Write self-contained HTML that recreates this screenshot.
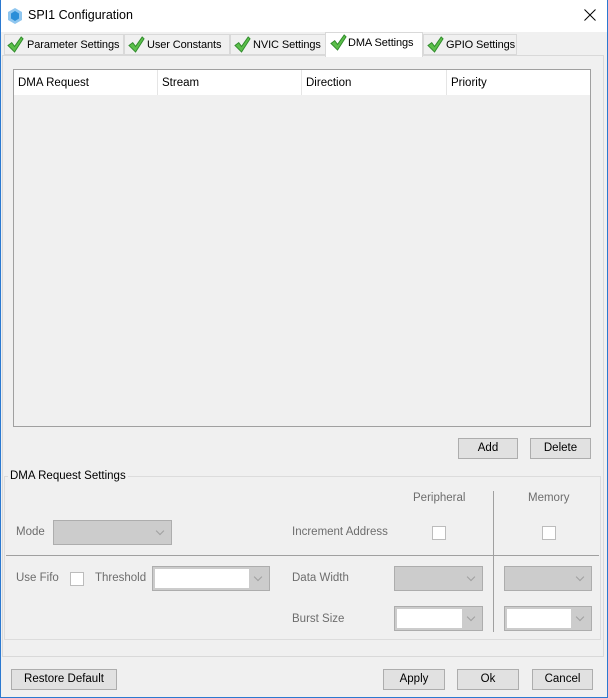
<!DOCTYPE html><html><head><style>
body{margin:0;width:608px;height:698px;background:#f0f0f0;font-family:"Liberation Sans",sans-serif;font-size:11.5px;color:#000;position:relative;overflow:hidden}
.a{position:absolute;white-space:nowrap}
.btn{position:absolute;background:#e1e1e1;border:1px solid #adadad;box-sizing:border-box;text-align:center;line-height:19px;font-size:11.5px}
.g{color:#6d6d6d}
.cb{position:absolute;width:12px;height:12px;background:#fff;border:1px solid #bcbcbc}
.dd{position:absolute;background:#cccccc;border:1px solid #adadad;box-sizing:border-box}
.dd:after{content:"";position:absolute;right:8px;top:7px;width:5px;height:5px;border-right:1px solid #a0a0a0;border-bottom:1px solid #a0a0a0;transform:rotate(45deg)}
.dw .in{position:absolute;left:2px;top:2px;bottom:2px;right:20px;background:#fff}
.tab{position:absolute;top:34px;height:21px;background:#f0f0f0;border:1px solid #d9d9d9;box-sizing:border-box;padding-left:22px;line-height:20px;font-size:11px;white-space:nowrap;overflow:hidden;letter-spacing:-0.1px}
</style></head><body>
<div class="a" style="left:0;top:0;width:608px;height:32px;background:#fff"></div>
<svg class="a" style="left:8px;top:8px" width="14" height="16"><polygon points="7,0 14,4 14,12 7,16 0,12 0,4" fill="#8fc6ef"/><polygon points="7,3 11,5.5 11,10.5 7,13 3,10.5 3,5.5" fill="#2a8ed8"/></svg>
<div class="a" style="left:28px;top:8px;font-size:12.5px">SPI1 Configuration</div>
<svg class="a" style="left:584px;top:9px" width="12" height="12"><path d="M0.5 0.5 L11.5 11.5 M11.5 0.5 L0.5 11.5" stroke="#000" stroke-width="1"/></svg>
<div class="a" style="left:2px;top:55px;width:602px;height:602px;background:#fff;border:1px solid #d9d9d9;box-sizing:border-box"></div>
<div class="a" style="left:3px;top:56px;width:600px;height:600px;background:#f0f0f0"></div>
<div class="tab" style="left:4px;width:120px">Parameter Settings</div>
<div class="tab" style="left:124px;width:106px">User Constants</div>
<div class="tab" style="left:230px;width:96px">NVIC Settings</div>
<div class="tab" style="left:325px;top:32px;height:25px;width:98px;background:#fff;border-bottom:none;line-height:21px">DMA Settings</div>
<div class="tab" style="left:423px;width:94px">GPIO Settings</div>
<svg width="0" height="0" style="position:absolute"><defs><symbol id="ck" viewBox="0 0 18 18"><path d="M1 10 L5 7 L8 11 L15 1 L17 3 L8 17 Z" fill="#5bbf4a" stroke="#2f8a2b" stroke-width="1"/></symbol></defs></svg>
<svg class="a" style="left:7px;top:36px" width="17" height="17"><use href="#ck"/></svg>
<svg class="a" style="left:128px;top:36px" width="17" height="17"><use href="#ck"/></svg>
<svg class="a" style="left:234px;top:36px" width="17" height="17"><use href="#ck"/></svg>
<svg class="a" style="left:330px;top:34px" width="17" height="17"><use href="#ck"/></svg>
<svg class="a" style="left:427px;top:36px" width="17" height="17"><use href="#ck"/></svg>
<div class="a" style="left:13px;top:69px;width:578px;height:358px;border:1px solid #a0a0a0;box-sizing:border-box;background:#f0f0f0"></div>
<div class="a" style="left:14px;top:70px;width:576px;height:25px;background:#fff"></div>
<div class="a" style="left:18px;top:77px">DMA Request</div>
<div class="a" style="left:157px;top:70px;width:1px;height:25px;background:#e5e5e5"></div>
<div class="a" style="left:162px;top:77px">Stream</div>
<div class="a" style="left:301px;top:70px;width:1px;height:25px;background:#e5e5e5"></div>
<div class="a" style="left:306px;top:77px">Direction</div>
<div class="a" style="left:446px;top:70px;width:1px;height:25px;background:#e5e5e5"></div>
<div class="a" style="left:451px;top:77px">Priority</div>
<div class="btn" style="left:458px;top:438px;width:60px;height:21px">Add</div>
<div class="btn" style="left:530px;top:438px;width:61px;height:21px">Delete</div>
<div class="a" style="left:4px;top:476px;width:597px;height:164px;border:1px solid #dcdcdc;box-sizing:border-box"></div>
<div class="a" style="left:8px;top:470px;background:#f0f0f0;padding:0 2px">DMA Request Settings</div>
<div class="a g" style="left:413px;top:492px">Peripheral</div>
<div class="a g" style="left:528px;top:492px">Memory</div>
<div class="a" style="left:493px;top:491px;width:1px;height:141px;background:#a0a0a0"></div>
<div class="a" style="left:6px;top:555px;width:593px;height:1px;background:#a0a0a0"></div>
<div class="a g" style="left:16px;top:526px">Mode</div>
<div class="dd" style="left:53px;top:520px;width:119px;height:25px"></div>
<div class="a g" style="left:292px;top:526px">Increment Address</div>
<div class="cb" style="left:432px;top:526px"></div>
<div class="cb" style="left:542px;top:526px"></div>
<div class="a g" style="left:16px;top:572px">Use Fifo</div>
<div class="cb" style="left:70px;top:572px"></div>
<div class="a g" style="left:95px;top:572px">Threshold</div>
<div class="dd dw" style="left:152px;top:566px;width:118px;height:25px"><div class="in"></div></div>
<div class="a g" style="left:292px;top:572px">Data Width</div>
<div class="dd" style="left:394px;top:566px;width:89px;height:25px"></div>
<div class="dd" style="left:504px;top:566px;width:88px;height:25px"></div>
<div class="a g" style="left:292px;top:613px">Burst Size</div>
<div class="dd dw" style="left:394px;top:606px;width:89px;height:25px"><div class="in"></div></div>
<div class="dd dw" style="left:504px;top:606px;width:88px;height:25px"><div class="in"></div></div>
<div class="btn" style="left:11px;top:669px;width:106px;height:21px">Restore Default</div>
<div class="btn" style="left:383px;top:669px;width:62px;height:21px">Apply</div>
<div class="btn" style="left:457px;top:669px;width:62px;height:21px">Ok</div>
<div class="btn" style="left:532px;top:669px;width:61px;height:21px">Cancel</div>
<div class="a" style="left:0;top:697px;width:608px;height:1px;background:#2b79d0"></div>
<div class="a" style="left:607px;top:0;width:1px;height:698px;background:#2b79d0"></div>
<div class="a" style="left:0;top:0;width:1px;height:698px;background:#2b79d0"></div>
</body></html>
